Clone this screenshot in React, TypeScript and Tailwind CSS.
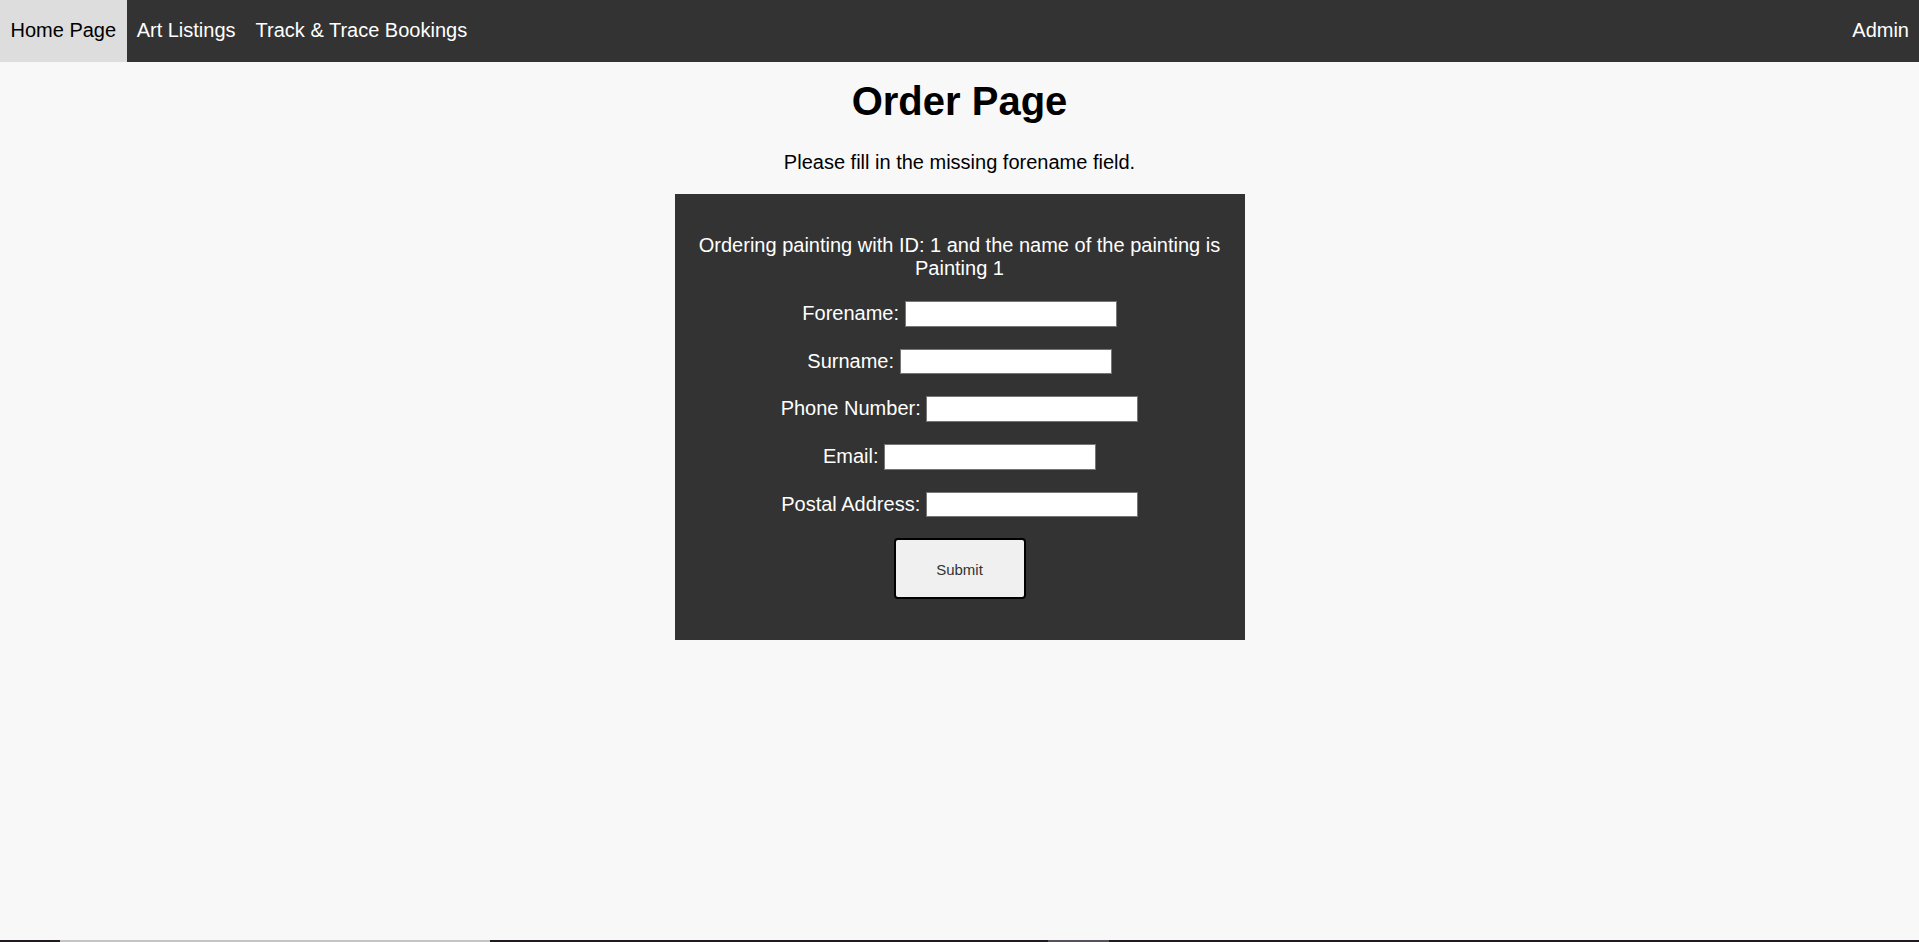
import { useState, ChangeEvent } from 'react'

type Field = {
  name: string
  label: string
}

const navLinks = ['Art Listings', 'Track & Trace Bookings']

const fields: Field[] = [
  { name: 'forename', label: 'Forename:' },
  { name: 'surname', label: 'Surname:' },
  { name: 'phone', label: 'Phone Number:' },
  { name: 'email', label: 'Email:' },
  { name: 'address', label: 'Postal Address:' },
]

export default function App() {
  const [values, setValues] = useState<Record<string, string>>({})

  const handleChange = (e: ChangeEvent<HTMLInputElement>) => {
    setValues({ ...values, [e.target.name]: e.target.value })
  }

  return (
    <div className="h-screen flex flex-col bg-[#f8f8f8] font-['Liberation_Sans',Arial,sans-serif] text-[20px] text-black">
      <nav className="h-[62px] flex bg-[#333333] shrink-0">
        <a className="px-[10.5px] pt-[18.5px] leading-[23px] bg-[#dddddd] text-black cursor-pointer">
          Home Page
        </a>
        {navLinks.map((link) => (
          <a
            key={link}
            className="px-[10px] pt-[18.5px] leading-[23px] text-white cursor-pointer"
          >
            {link}
          </a>
        ))}
        <a className="ml-auto px-[10px] pt-[18.5px] leading-[23px] text-white cursor-pointer">
          Admin
        </a>
      </nav>

      <main className="flex flex-col items-center">
        <h1 className="mt-[16px] text-[40px] leading-[46px] font-bold text-center">
          Order Page
        </h1>
        <p className="mt-[27px] leading-[23px] text-center">
          Please fill in the missing forename field.
        </p>
        <form
          className="mt-[20px] w-[570px] bg-[#333333] p-[20px] pb-[21px] text-white text-center"
          onSubmit={(e) => e.preventDefault()}
        >
          <p className="mt-[20px] leading-[23px]">
            Ordering painting with ID: 1 and the name of the painting is Painting 1
          </p>
          {fields.map((field) => (
            <div
              key={field.name}
              className="mt-[20px] h-[27.7px] flex justify-center items-center gap-[5.6px]"
            >
              <label htmlFor={field.name} className="leading-[23px] pb-[1px]">
                {field.label}
              </label>
              <input
                id={field.name}
                name={field.name}
                type="text"
                value={values[field.name] ?? ''}
                onChange={handleChange}
                className="w-[212px] h-[25.6px] bg-white border border-[#767676] text-black text-[16px] px-[2px] outline-none"
              />
            </div>
          ))}
          <div className="mt-[20px] mb-[20px] flex justify-center">
            <button
              type="submit"
              className="w-[132px] h-[61px] pt-[3px] bg-[#f0f0f0] border-2 border-black rounded-[4px] text-[15px] text-[#333333] cursor-pointer"
            >
              Submit
            </button>
          </div>
        </form>
      </main>

      <div className="flex-1" />
      <div className="h-[2px] flex shrink-0 bg-[#201b1e]">
        <div className="w-[60px]" />
        <div className="w-[430px] bg-[#c4c4c4]" />
        <div className="w-[558px]" />
        <div className="w-[61px] bg-[#56525a]" />
      </div>
    </div>
  )
}
